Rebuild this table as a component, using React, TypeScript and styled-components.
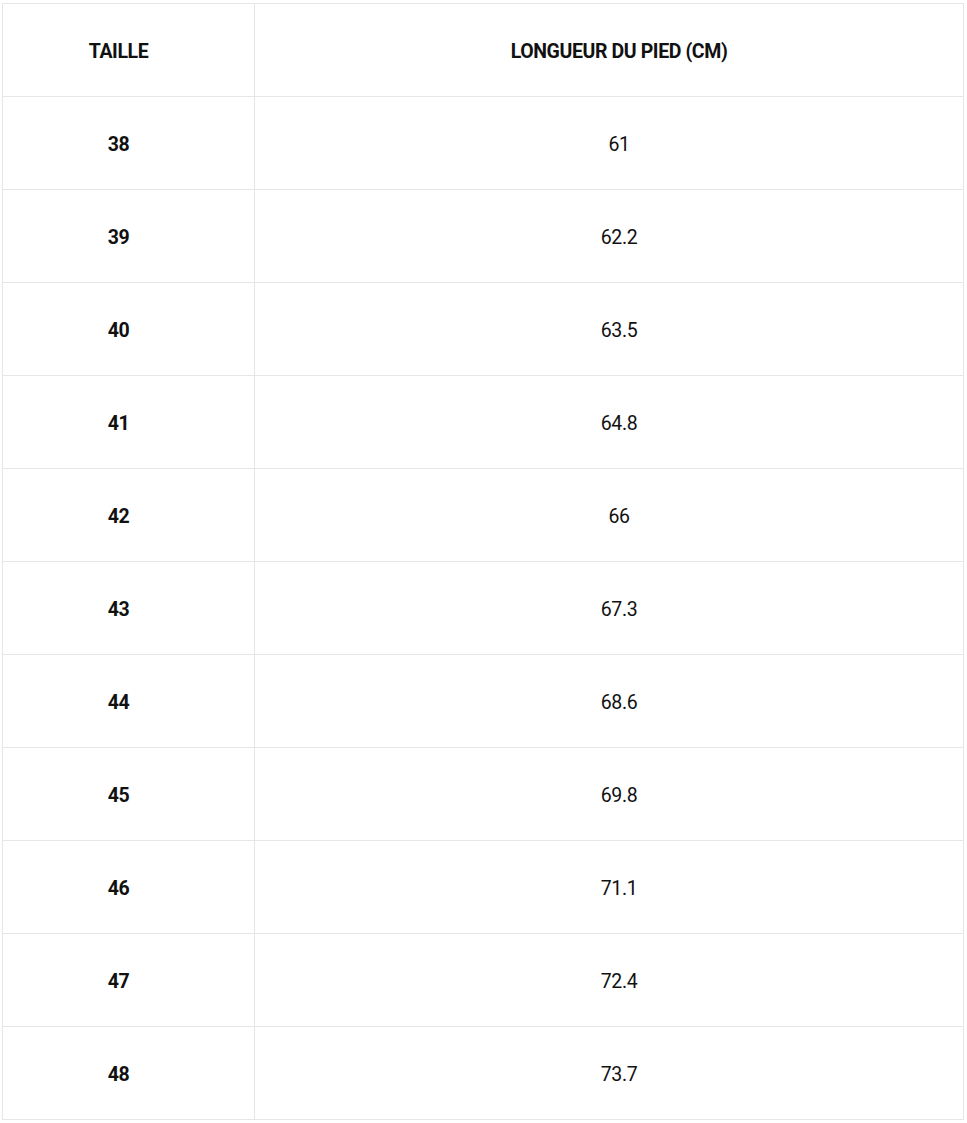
import React from "react";
import styled, { createGlobalStyle } from "styled-components";

const GlobalStyle = createGlobalStyle`
  body {
    margin: 0;
    background: #ffffff;
    font-family: Roboto, "Noto Sans", sans-serif;
    color: #111111;
  }
`;

const Wrapper = styled.div`
  padding: 3px 3px 0 2px;
`;

const Table = styled.table`
  width: 962px;
  border-collapse: collapse;
  table-layout: fixed;
`;

const Cell = styled.td<{ $first?: boolean; $bold?: boolean }>`
  box-sizing: border-box;
  height: 93px;
  padding: 2px 0 0;
  padding-left: ${(p) => (p.$first ? "0" : "20px")};
  padding-right: ${(p) => (p.$first ? "20px" : "0")};
  border: 1px solid #e6e6e6;
  text-align: center;
  vertical-align: middle;
  font-size: 19.5px;
  font-weight: ${(p) => (p.$bold ? 700 : 400)};
  letter-spacing: -0.4px;
  width: ${(p) => (p.$first ? "252px" : "auto")};
`;

const HeadCell = styled(Cell).attrs({ as: "th" })``;

const sizes: [string, string][] = [
  ["38", "61"],
  ["39", "62.2"],
  ["40", "63.5"],
  ["41", "64.8"],
  ["42", "66"],
  ["43", "67.3"],
  ["44", "68.6"],
  ["45", "69.8"],
  ["46", "71.1"],
  ["47", "72.4"],
  ["48", "73.7"],
];

const App = () => {
  return (
    <>
      <GlobalStyle />
      <Wrapper>
        <Table>
          <thead>
            <tr>
              <HeadCell $first $bold>
                TAILLE
              </HeadCell>
              <HeadCell $bold>LONGUEUR DU PIED (CM)</HeadCell>
            </tr>
          </thead>
          <tbody>
            {sizes.map(([size, length]) => (
              <tr key={size}>
                <Cell $first $bold>
                  {size}
                </Cell>
                <Cell>{length}</Cell>
              </tr>
            ))}
          </tbody>
        </Table>
      </Wrapper>
    </>
  );
};

export default App;
